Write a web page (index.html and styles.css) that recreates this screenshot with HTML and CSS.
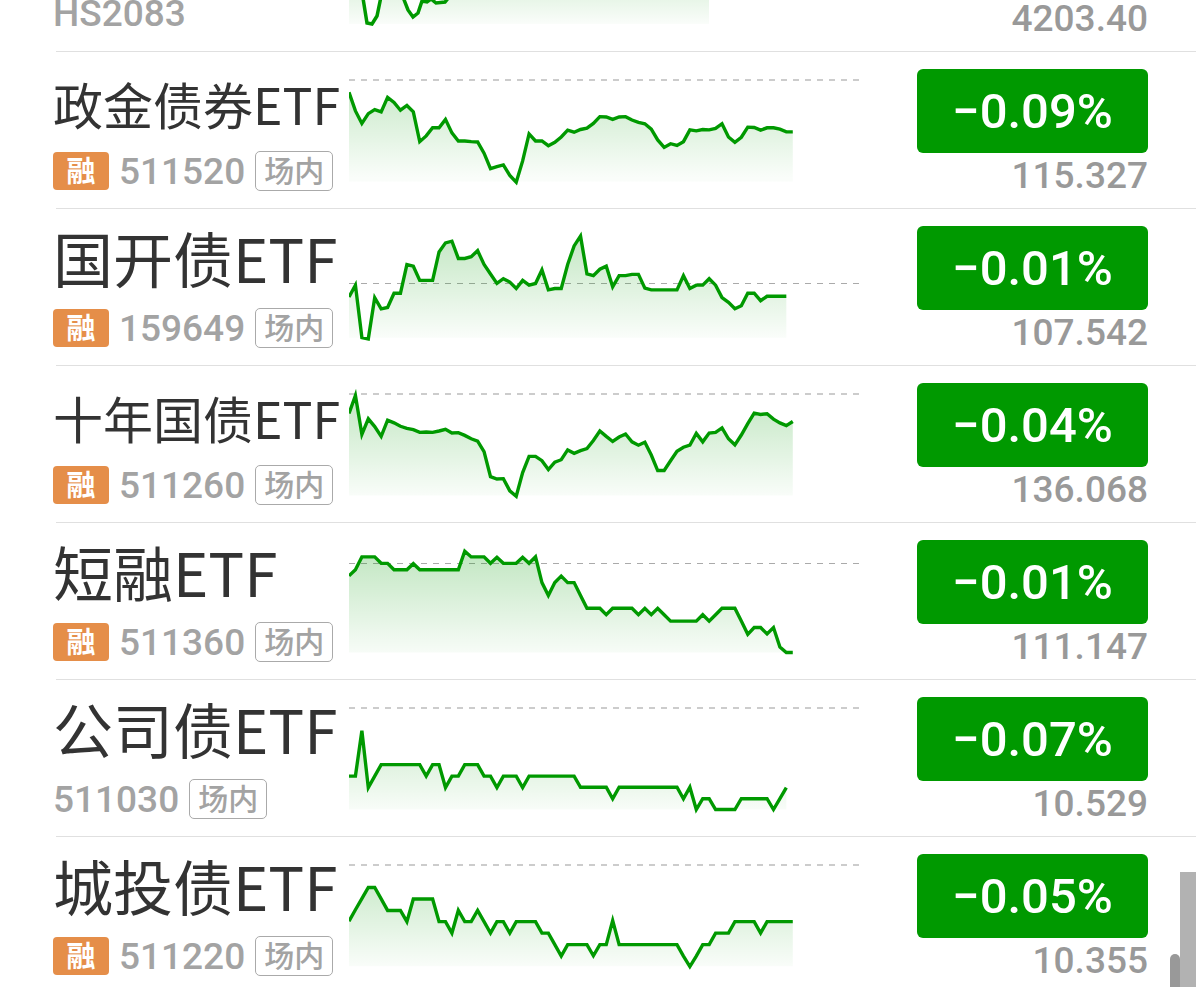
FILE: index.html
```html
<!DOCTYPE html>
<html lang="zh-CN">
  <head>
    <meta charset="UTF-8" />
    <meta name="viewport" content="width=device-width, initial-scale=1.0" />
    <title>债券ETF</title>
    <link rel="stylesheet" href="styles.css">
  </head>
  <body>
    <!-- Shared chart fill -->
    <svg class="defs" aria-hidden="true">
      <defs>
        <linearGradient id="fill" gradientUnits="userSpaceOnUse" x1="0" y1="40" x2="0" y2="350">
          <stop offset="0" stop-color="#009900" stop-opacity="0.24" />
          <stop offset="1" stop-color="#009900" stop-opacity="0.02" />
        </linearGradient>
        <linearGradient id="fill-short" gradientUnits="userSpaceOnUse" x1="0" y1="0" x2="0" y2="24">
          <stop offset="0" stop-color="#009900" stop-opacity="0.09" />
          <stop offset="1" stop-color="#009900" stop-opacity="0.02" />
        </linearGradient>
      </defs>
    </svg>

    <main class="list">
      <!-- Row scrolled under the top edge -->
      <section class="row row-cut">
        <div class="info"><span class="code">HS2083</span></div>
        <svg class="chart" viewBox="0 0 511 51">
          <path fill="url(#fill-short)" d="M0 0H14L18 23L23 24L28 16L32 0H55L59 10L64 17L69 13L73 1L78 2L82 0L87 3H96L99 0H360V24H0Z" />
          <path class="line-px" d="M13 -8L18 23L23 24L28 16L33 -8M52 -8L59 10L64 17L69 13L73 1L78 2L82 -1L87 3L96 2L101 -4" />
        </svg>
        <div class="quote"><span class="price">4203.40</span></div>
      </section>

      <section class="row">
        <div class="info">
          <h2 class="name name-long">政金债券ETF</h2>
          <div class="meta"><span class="tag">融</span><span class="code">511520</span><span class="market">场内</span></div>
        </div>
        <svg class="chart" viewBox="0 -22 1512 461" data-ref="60" data-bottom="361" data-values="97 152 189 160 148 155 112 127 150 136 155 243 226 202 202 177 217 241 241 243 244 277 323 317 312 343 363 300 220 241 241 255 245 229 209 215 207 203 189 169 170 177 170 169 179 186 190 206 238 260 249 254 243 208 211 207 208 204 190 229 245 230 200 201 209 202 202 206 214 214"></svg>
        <div class="quote"><button class="change" type="button">−0.09%</button><span class="price">115.327</span></div>
      </section>

      <section class="row">
        <div class="info">
          <h2 class="name">国开债ETF</h2>
          <div class="meta"><span class="tag">融</span><span class="code">159649</span><span class="market">场内</span></div>
        </div>
        <svg class="chart chart-thin" viewBox="0 -30 1512 461" data-ref="190" data-bottom="351" data-values="230 195 350 354 232 265 261 219 219 134 139 181 181 181 97 70 65 116 116 111 93 134 162 190 176 186 205 181 195 190 150 209 205 205 134 79 50 162 167 148 139 200 167 167 163 163 204 209 209 209 209 209 167 205 195 195 176 195 232 246 265 256 219 219 241 228 228 228 228"></svg>
        <div class="quote"><button class="change" type="button">−0.01%</button><span class="price">107.542</span></div>
      </section>

      <section class="row">
        <div class="info">
          <h2 class="name name-long">十年国债ETF</h2>
          <div class="meta"><span class="tag">融</span><span class="code">511260</span><span class="market">场内</span></div>
        </div>
        <svg class="chart" viewBox="0 -40 1512 461" data-ref="42" data-bottom="343" data-values="100 47 162 116 139 168 120 128 138 144 148 156 155 156 152 147 158 157 165 175 182 213 287 294 293 329 345 275 227 227 240 266 244 237 208 218 210 204 180 152 168 183 170 161 184 194 185 223 269 269 240 212 200 194 159 184 158 156 143 175 193 164 130 99 103 101 117 128 136 124"></svg>
        <div class="quote"><button class="change" type="button">−0.04%</button><span class="price">136.068</span></div>
      </section>

      <section class="row">
        <div class="info">
          <h2 class="name">短融ETF</h2>
          <div class="meta"><span class="tag">融</span><span class="code">511360</span><span class="market">场内</span></div>
        </div>
        <svg class="chart chart-thin" viewBox="0 -49 1512 461" data-ref="71" data-bottom="334" data-values="107 89 51 51 51 70 70 89 89 89 71 89 89 89 89 89 89 89 34 51 51 51 70 52 70 70 70 52 70 51 127 165 127 108 127 127 165 203 203 203 222 203 203 203 203 222 203 222 203 222 241 241 241 241 241 222 241 222 203 203 203 241 280 260 260 279 260 318 334 334"></svg>
        <div class="quote"><button class="change" type="button">−0.01%</button><span class="price">111.147</span></div>
      </section>

      <section class="row">
        <div class="info">
          <h2 class="name">公司债ETF</h2>
          <div class="meta"><span class="code">511030</span><span class="market">场内</span></div>
        </div>
        <svg class="chart" viewBox="0 -43 1512 461" data-ref="39" data-bottom="340" data-values="241 241 107 275 241 207 207 207 207 207 207 207 241 207 207 275 241 241 207 207 207 241 241 275 241 241 241 275 241 241 241 241 241 241 241 241 274 274 274 274 274 308 274 274 274 274 274 274 274 274 274 274 308 274 340 308 308 340 340 340 340 308 308 308 308 308 340 308 275"></svg>
        <div class="quote"><button class="change" type="button">−0.07%</button><span class="price">10.529</span></div>
      </section>

      <section class="row">
        <div class="info">
          <h2 class="name">城投债ETF</h2>
          <div class="meta"><span class="tag">融</span><span class="code">511220</span><span class="market">场内</span></div>
        </div>
        <svg class="chart" viewBox="0 -37 1512 461" data-ref="45" data-bottom="345" data-values="212 178 145 112 112 146 180 180 180 213 146 146 146 146 213 213 247 180 213 213 180 213 247 213 213 247 213 213 213 213 247 247 281 315 281 281 281 281 314 281 281 210 281 281 281 281 281 281 281 281 281 281 315 346 315 281 281 247 247 247 213 213 213 213 247 213 213 213 213 213"></svg>
        <div class="quote"><button class="change" type="button">−0.05%</button><span class="price">10.355</span></div>
      </section>
    </main>

    <div class="scroll-thumb"></div>
    <div class="side-handle"></div>

    <script src="script.js"></script>
  </body>
</html>
```
FILE: styles.css
```css
/* General Styles */
* {
  box-sizing: border-box;
}

body {
  margin: 0;
  height: 100vh;
  overflow: hidden;
  background-color: #fff;
  color: #333;
  font-family: Roboto, "Noto Sans CJK SC", sans-serif;
}

.defs {
  position: absolute;
  width: 0;
  height: 0;
}

/* Rows */
.row {
  display: flex;
  height: 157px;
  margin-left: 53px;
  padding-right: 48px;
  background: linear-gradient(#e0e0e0, #e0e0e0) 3px 100% / 100% 1px no-repeat;
}

.info {
  flex: 0 0 296px;
  white-space: nowrap;
}

.name {
  margin: 0;
  height: 99px;
  padding-top: 4px;
  font-family: "Noto Sans CJK SC", sans-serif;
  font-size: 60px;
  font-weight: 400;
  line-height: 88px;
}

.name-long {
  font-size: 50px;
  line-height: 94px;
}

.meta {
  display: flex;
  align-items: center;
  gap: 10px;
  height: 40px;
}

.tag {
  width: 56px;
  height: 38px;
  border-radius: 4px;
  background-color: #e58e49;
  color: #fff;
  font-size: 29px;
  font-weight: 700;
  line-height: 40px;
  text-align: center;
}

.code {
  color: #a3a3a3;
  font-size: 37px;
  font-weight: 500;
  line-height: 44px;
}

.meta .code {
  padding-top: 2px;
}

.market {
  width: 78px;
  height: 40px;
  border: 1px solid #aaa;
  border-radius: 5px;
  color: #a3a3a3;
  font-size: 30px;
  font-weight: 500;
  line-height: 40px;
  text-align: center;
}

/* Chart */
.chart {
  flex: 0 1 511px;
  min-width: 0;
  height: 156px;
}

.chart .line {
  fill: none;
  stroke: #090;
  stroke-width: 10;
}

.chart .ref {
  stroke: #ccc;
  stroke-width: 6;
  stroke-dasharray: 18 17.5;
  shape-rendering: crispEdges;
}

.chart-thin .ref {
  stroke: #aaa;
  stroke-width: 3;
}

.line-px {
  fill: none;
  stroke: #090;
  stroke-width: 3.5;
}

/* Quote */
.quote {
  display: flex;
  flex-direction: column;
  align-items: flex-end;
  flex: 0 0 231px;
  margin-left: auto;
  padding-top: 17px;
}

.change {
  width: 100%;
  height: 84px;
  padding: 2px 0 0;
  border: none;
  border-radius: 6px;
  background-color: #090;
  color: #fff;
  font-family: inherit;
  font-size: 49px;
  font-weight: 500;
  line-height: 82px;
  cursor: pointer;
}

.price {
  color: #999;
  font-size: 37px;
  font-weight: 500;
  line-height: 46px;
}

/* First row, cut off by the top edge */
.row-cut {
  height: 52px;
}

.row-cut .chart {
  height: 51px;
}

.row-cut .info {
  display: flex;
  align-items: flex-end;
  padding-bottom: 16px;
}

.row-cut .quote {
  justify-content: flex-end;
  padding: 0 0 10px;
}

/* Right edge handles */
.scroll-thumb,
.side-handle {
  position: fixed;
  bottom: 0;
}

.scroll-thumb {
  right: 16px;
  width: 10px;
  height: 33px;
  border-radius: 5px 5px 0 0;
  background-color: #999;
}

.side-handle {
  right: 0;
  width: 16px;
  height: 115px;
  background-color: #b2b2b2;
}
```
FILE: script.js
```js
const STEP = 19.03;
const SVG_NS = 'http://www.w3.org/2000/svg';

function addShape(svg, tag, attrs) {
  const el = document.createElementNS(SVG_NS, tag);
  for (const key in attrs) el.setAttribute(key, attrs[key]);
  svg.appendChild(el);
}

// Draw the previous close, the area and the price line
document.querySelectorAll('.chart[data-values]').forEach((svg) => {
  const values = svg.dataset.values.split(' ').map(Number);
  const { ref, bottom } = svg.dataset;
  const points = values.map((y, i) => `${(i * STEP).toFixed(1)},${y}`).join(' ');
  const right = ((values.length - 1) * STEP).toFixed(1);

  addShape(svg, 'line', { class: 'ref', x1: 0, x2: 1512, y1: ref, y2: ref });
  addShape(svg, 'polygon', { fill: 'url(#fill)', points: `0,${bottom} ${points} ${right},${bottom}` });
  addShape(svg, 'polyline', { class: 'line', points });
});
```
